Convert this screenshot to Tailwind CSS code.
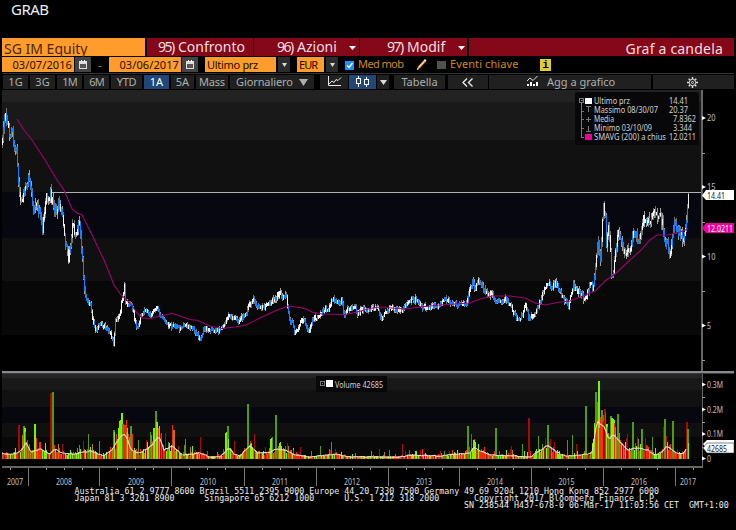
<!DOCTYPE html>
<html lang="it">
<head>
  <meta charset="UTF-8" />
  <meta name="viewport" content="width=device-width, initial-scale=1.0"/>
  <title>GRAB - SG IM Equity</title>
  <script src="https://cdn.jsdelivr.net/npm/@tailwindcss/browser@4"></script>
</head>
<body class="bg-black w-[736px] h-[530px] overflow-hidden font-['Noto_Sans',sans-serif] text-[11px] leading-none">
  <header class="h-[38px] pl-[11px] pt-px text-[15px] leading-[16px] tracking-[-0.5px] text-[#eee]">GRAB</header>

  <!-- title bar -->
  <div class="flex h-[19px] pl-[2px] pr-[2px] pb-px text-[14px] leading-[17px] text-[#f4dfe2] whitespace-nowrap">
    <div class="w-[143px] mr-[2px] pl-[2px] pt-[2px] bg-[#ff9c2b] text-[#4a2800]">SG IM Equity</div>
    <div class="w-[106px] mr-px pl-[11px] flex bg-[#840817]"><span class="w-[20px] tracking-[-1.5px]">95)</span>Confronto</div>
    <div class="w-[105px] mr-px pl-[23px] pr-[3px] flex bg-[#840817]"><span class="w-[20px] tracking-[-1.5px]">96)</span>Azioni
      <svg class="ml-auto mt-[8px]" width="7" height="4"><path d="M0 0h7L3.5 4z" fill="#fff"/></svg></div>
    <div class="w-[107px] mr-[2px] pl-[27px] pr-[2px] flex bg-[#840817]"><span class="w-[20px] tracking-[-1.5px]">97)</span>Modif
      <svg class="ml-auto mt-[8px]" width="7" height="4"><path d="M0 0h7L3.5 4z" fill="#fff"/></svg></div>
    <div class="flex-1 pr-[11px] pt-[2px] text-right bg-[#840817] tracking-[0.2px]">Graf a candela</div>
  </div>

  <!-- date range and fields -->
  <div class="flex h-[16px] pl-[2px] pb-px leading-[15px] text-[#1a0e00] whitespace-nowrap">
    <div class="w-[72px] pr-[2px] text-right bg-[#ff9c2b] tracking-[0.1px]">03/07/2016</div>
    <div class="w-[16px] ml-px bg-[#444] flex items-center justify-center">
      <svg width="8" height="9" shape-rendering="crispEdges"><path d="M0 1h8v8H0z" fill="#ddd"/><path d="M1 4h6v4H1z" fill="#555"/><path d="M2 0h1v2H2zM5 0h1v2H5z" fill="#fff"/></svg></div>
    <div class="w-[18px] text-center text-[#d98a1c]">-</div>
    <div class="w-[72px] pr-[2px] text-right bg-[#ff9c2b] tracking-[0.1px]">03/06/2017</div>
    <div class="w-[16px] ml-px bg-[#444] flex items-center justify-center">
      <svg width="8" height="9" shape-rendering="crispEdges"><path d="M0 1h8v8H0z" fill="#ddd"/><path d="M1 4h6v4H1z" fill="#555"/><path d="M2 0h1v2H2zM5 0h1v2H5z" fill="#fff"/></svg></div>
    <div class="w-[71px] ml-[7px] pl-[2px] bg-[#ff9c2b] tracking-[-0.3px]">Ultimo prz</div>
    <div class="w-[12px] ml-[2px] bg-[#2c2c2c] flex items-center justify-center"><svg width="5" height="4"><path d="M0 0h5L2.500 4z" fill="#ddd"/></svg></div>
    <div class="w-[27px] ml-[7px] pl-[2px] bg-[#ff9c2b] tracking-[-0.9px]">EUR</div>
    <div class="w-[12px] ml-[2px] bg-[#2c2c2c] flex items-center justify-center"><svg width="5" height="4"><path d="M0 0h5L2.500 4z" fill="#ddd"/></svg></div>
    <svg class="ml-[7px] mt-[4px]" width="9" height="9"><path d="M0 0h9v9H0z" fill="#1e8fff"/><path d="M2 4.500l2 2L7.500 2" fill="none" stroke="#fff" stroke-width="1.400"/></svg>
    <div class="w-[58px] ml-[4px] text-[#d08a10] leading-[14px] tracking-[-0.6px]">Med mob</div>
    <svg class="mt-[2px]" width="11" height="12"><path d="M1 11L2 7.500 7.500 1.500 9.500 3 4 9z" fill="#f2a54a"/><path d="M3 8L8 2.500" stroke="#ffe2b0"/><path d="M7.500 1.500L9 0l1.500 1.500-1 1.500z" fill="#eee"/><path d="M1 11l.5-2L3 10z" fill="#eee"/></svg>
    <div class="w-[9px] h-[8px] ml-[10px] mt-[4px] bg-[#4c544c]"></div>
    <div class="w-[90px] ml-[4px] text-[#d08a10] leading-[14px] tracking-[0.1px]">Eventi chiave</div>
    <div class="w-[11px] h-[12px] mt-[2px] bg-[#e3cc2c] text-center font-['Liberation_Mono',monospace] font-bold text-[11px] leading-[12px] text-black">i</div>
  </div>

  <!-- period buttons -->
  <nav class="flex h-[17px] ml-[2px] pl-px pt-px mr-[2px] border-t border-[#333] text-[#aab0ae] leading-[13px] text-center whitespace-nowrap">
    <div class="w-[25px] h-[14px] mr-[2px] bg-[#202020]">1G</div>
    <div class="w-[25px] h-[14px] mr-[2px] bg-[#202020]">3G</div>
    <div class="w-[25px] h-[14px] mr-[2px] bg-[#202020] tracking-[-0.8px]">1M</div>
    <div class="w-[25px] h-[14px] mr-[2px] bg-[#202020] tracking-[-0.8px]">6M</div>
    <div class="w-[31px] h-[14px] mr-[2px] bg-[#202020] tracking-[-0.3px]">YTD</div>
    <div class="w-[25px] h-[14px] mr-[2px] bg-[#1f4878] text-white">1A</div>
    <div class="w-[23px] h-[14px] mr-[2px] bg-[#202020]">5A</div>
    <div class="w-[32px] h-[14px] mr-[2px] bg-[#202020] tracking-[-0.2px]">Mass</div>
    <div class="w-[84px] h-[14px] mr-[6px] pl-[6px] bg-[#202020] flex"><span class="tracking-[-0.1px]">Giornaliero</span><svg class="ml-[6px] mt-[4px]" width="9" height="7"><path d="M0 0h9L4.500 7z" fill="#aab0ae"/></svg></div>
    <div class="w-[28px] h-[14px] mr-px pl-[7px] bg-[#202020]">
      <svg width="15" height="13" fill="none" stroke="#e8e8e8"><path d="M1.500 1v9.500H14M2 9l3-3 2 1.500 2-3 2 1 3-3"/></svg></div>
    <div class="w-[27px] h-[14px] mr-px pl-[6px] bg-[#1f4878]">
      <svg width="15" height="13" fill="none" stroke="#fff" shape-rendering="crispEdges"><path d="M1.500 3.500h4v5h-4zM3.500 1v2M3.500 9v3M9.500 4.500h4v5h-4zM11.500 2v2M11.500 10v2"/></svg></div>
    <div class="w-[12px] h-[14px] mr-[5px] bg-[#202020] flex items-center justify-center"><svg width="7" height="5"><path d="M0 0h7L3.500 5z" fill="#ddd"/></svg></div>
    <div class="w-[51px] h-[14px] mr-[3px] bg-[#202020]">Tabella</div>
    <div class="w-[40px] h-[14px] mr-px bg-[#202020] flex items-center justify-center">
      <svg width="12" height="9" fill="none" stroke="#eee" stroke-width="1.300"><path d="M5 .5l-4 4 4 4M10.500 .5l-4 4 4 4"/></svg></div>
    <div class="w-[162px] h-[14px] mr-[2px] pl-[38px] bg-[#202020] flex">
      <svg class="mt-px" width="12" height="11"><path d="M0 5l3-3 3 2.500L10.500 0" fill="none" stroke="#ddd"/><path d="M0 8h2v2H0zM3 6h2v4H3zM6 8h2v2H6zM9 6h2v4H9z" fill="#fff"/></svg>
      <span class="ml-[8px]">Agg a grafico</span></div>
    <div class="flex-1 h-[14px] pr-[3px] bg-[#202020] flex items-center justify-center">
      <svg width="11" height="11" fill="none" stroke="#ddd"><circle cx="5.500" cy="5.500" r="3.200"/><circle cx="5.500" cy="5.500" r="1"/><path stroke-width="1.500" d="M5.500 0v2M5.500 9v2M0 5.500h2M9 5.500h2M1.700 1.700l1.300 1.300M8 8l1.300 1.300M9.300 1.700L8 3M3 8L1.700 9.300"/></svg></div>
  </nav>

  <!-- price and volume; drawn in window coordinates -->
  <svg id="chart" class="block" width="736" height="396" viewBox="0 90 736 396" font-family="Noto Sans, sans-serif" font-size="8.500">
    <g shape-rendering="crispEdges">
      <path d="M2 90h700v12H2z" fill="#222"/>
      <path d="M2 102h700v38H2z" fill="#191919"/>
      <path d="M2 140h700v52H2z" fill="#111"/>
      <path d="M2 192h700v46H2z" fill="#070710"/>
      <path d="M2 238h700v43H2z" fill="#101010"/>
      <path d="M2 281h700v54H2z" fill="#080808"/>
      <path d="M2 374h700v4H2z" fill="#242424"/>
      <path d="M2 378h700v12H2z" fill="#191919"/>
      <path d="M2 390h700v17H2z" fill="#111"/>
      <path d="M2 407h700v16H2z" fill="#070710"/>
      <path d="M2 423h700v14H2z" fill="#101010"/>
      <path d="M2 437h700v21H2z" fill="#080808"/>
      <path d="M50 192h652" transform="translate(0 .5)" stroke="#b0b0b0"/>
      <path d="M2 371h732v2H2z" fill="#8b878e"/>
      <path d="M2 373h732v1H2z" fill="#3c3a3e"/>
      <path d="M2 466h701v2H2z" fill="#66665f"/>
      <path d="M701 90h2v281h-2zM702 374h1v94h-1z" fill="#66665f"/>
    </g>
    <g id="volume" shape-rendering="crispEdges"></g>
    <polyline id="volumeAvg" fill="none" stroke="#e4dccc" stroke-width="1.100"/>
    <g id="price" shape-rendering="crispEdges"></g>
    <polyline id="sma" fill="none" stroke="#a00070" stroke-width="1.100"/>
    <g id="axes"></g>

    <g fill="#d0d0d0">
      <rect x="575" y="92" width="124" height="53" rx="2" fill="#08080a"/>
      <path d="M579.500 98.500h4v4h-4zM580.500 100.500h2M581.500 103v34.500M582 111.500h2M582 119.500h2M582 128.500h2M582 137.500h2M586 106.500h5M588.500 107v5M586 119.500h5M588.500 117v5M586 131.500h5M588.500 126v5" fill="none" stroke="#777" shape-rendering="crispEdges"/>
      <path d="M585 98h7v6h-7z" fill="#fff"/>
      <path d="M585 134h7v6h-7z" fill="#f0009a"/>
      <text x="594" y="104" textLength="36" lengthAdjust="spacingAndGlyphs">Ultimo prz</text>
      <text x="594" y="113" textLength="64" lengthAdjust="spacingAndGlyphs">Massimo 08/30/07</text>
      <text x="594" y="122" textLength="20" lengthAdjust="spacingAndGlyphs">Media</text>
      <text x="594" y="131" textLength="58" lengthAdjust="spacingAndGlyphs">Minimo 03/10/09</text>
      <text x="594" y="140" textLength="72" lengthAdjust="spacingAndGlyphs">SMAVG (200) a chius</text>
      <text x="669" y="104" textLength="19" lengthAdjust="spacingAndGlyphs">14.41</text>
      <text x="669" y="113" textLength="19" lengthAdjust="spacingAndGlyphs">20.37</text>
      <text x="673" y="122" textLength="23" lengthAdjust="spacingAndGlyphs">7.8362</text>
      <text x="673" y="131" textLength="19" lengthAdjust="spacingAndGlyphs">3.344</text>
      <text x="669" y="140" textLength="27" lengthAdjust="spacingAndGlyphs">12.0211</text>
      <rect x="316" y="376" width="71" height="16" fill="#08080a"/>
      <path d="M320.500 381.500h4v4h-4zM322 383.500h1" fill="none" stroke="#777" shape-rendering="crispEdges"/>
      <path d="M326 380h7v7h-7z" fill="#fff"/>
      <text x="335" y="387.500" textLength="48" lengthAdjust="spacingAndGlyphs">Volume 42685</text>
    </g>

    <path d="M702 195.500l4-5.500h28v10h-28z" fill="#fff"/>
    <text x="707" y="198.500" textLength="18" lengthAdjust="spacingAndGlyphs" fill="#222">14.41</text>
    <path d="M702 228l4-5h28v10h-28z" fill="#f0009a"/>
    <text x="707" y="231.500" textLength="26" lengthAdjust="spacingAndGlyphs" fill="#fff">12.0211</text>
    <path d="M703 444l4-4h27v9h-27z" fill="#fff"/>
    <path d="M703 448l4-5h27v10h-27z" fill="#fff" stroke="#333" stroke-width=".6"/>
    <text x="707" y="451.500" textLength="20" lengthAdjust="spacingAndGlyphs" fill="#222">42685</text>
  </svg>

  <pre class="w-[660px] mt-[2px] ml-[74.500px] font-['DejaVu_Sans_Mono',monospace] text-[8.300px] leading-[7px] text-[#eee]">Australia 61 2 9777 8600 Brazil 5511 2395 9000 Europe 44 20 7330 7500 Germany 49 69 9204 1210 Hong Kong 852 2977 6000
Japan 81 3 3201 8900      Singapore 65 6212 1000      U.S. 1 212 318 2000       Copyright 2017 Bloomberg Finance L.P.
                                                                              SN 238544 H437-678-0 06-Mar-17 11:03:56 CET  GMT+1:00</pre>

  <script>
    const NS = 'http://www.w3.org/2000/svg';
    let seed = 42;
    const rnd = () => (seed = (seed * 16807) % 2147483647) / 2147483647;
    const parse = (s) => s.trim().split(/\s+/).map(p => p.split(',').map(Number));
    const at = (pts, x) => {
      let i = 1;
      while (i < pts.length - 1 && pts[i][0] < x) i++;
      const [x0, y0] = pts[i - 1], [x1, y1] = pts[i];
      return y0 + (y1 - y0) * Math.min(1, Math.max(0, (x - x0) / (x1 - x0)));
    };
    const rect = (g, x, y, w, h, fill) => {
      const r = document.createElementNS(NS, 'rect');
      r.setAttribute('x', x); r.setAttribute('y', y);
      r.setAttribute('width', w); r.setAttribute('height', h);
      r.setAttribute('fill', fill);
      g.appendChild(r);
    };
    const label = (g, x, y, str, anchor, width) => {
      const t = document.createElementNS(NS, 'text');
      t.setAttribute('x', x); t.setAttribute('y', y);
      t.setAttribute('fill', '#c0c0c0');
      t.setAttribute('text-anchor', anchor);
      t.setAttribute('textLength', width);
      t.setAttribute('lengthAdjust', 'spacingAndGlyphs');
      t.textContent = str;
      g.appendChild(t);
    };

    const close = parse(`2,143 3,130 5,116 7,125 10,137 12,131 14,142 16,152 17,165 18,180 19,193 21,200 23,198 25,188 28,178 30,184
      32,203 33,212 35,200 37,207 40,215 42,227 44,215 46,196 48,200 50,194 53,205 55,210 58,204 60,206 62,218 64,238 66,248 68,257
      70,248 72,222 74,230 76,236 78,220 80,232 82,260 84,290 86,300 88,303 90,305 92,318 94,327 97,329 100,322 103,325 107,329
      110,332 113,345 115,322 118,318 120,310 122,296 124,285 125,300 127,305 130,302 133,312 135,323 137,328 140,316 143,312
      145,309 148,314 152,313 155,309 157,306 160,314 164,319 168,324 175,327 180,328 187,325 193,329 197,334 200,339 204,328
      212,329 219,330 224,326 227,316 233,316 238,321 242,317 246,314 248,305 253,299 256,304 260,308 266,305 272,300 276,296
      280,293 283,298 286,296 287,305 289,320 292,322 294,331 297,329 300,320 303,319 306,325 309,331 312,318 317,316 320,313
      323,309 328,308 332,297 335,299 338,303 341,300 344,315 347,306 350,309 354,305 357,314 361,309 370,309 377,306 380,318
      384,314 390,307 395,308 402,309 406,302 411,299 416,300 422,307 430,306 440,304 445,297 450,302 457,304 466,302 468,294
      472,281 474,289 477,281 481,285 486,293 490,294 494,300 500,301 506,299 510,304 513,311 517,318 521,316 525,305 529,319
      535,312 540,300 544,287 548,284 552,286 556,283 560,293 565,299 568,305 573,284 577,290 580,293 584,300 588,290 590,283
      593,287 595,265 598,240 600,258 602,220 603,208 605,220 606,245 608,224 610,250 611,275 613,270 616,245 618,232 620,240
      623,250 626,252 629,253 631,248 633,230 636,235 638,245 640,237 643,217 646,223 650,220 653,210 656,214 660,217 662,221
      664,239 667,246 669,252 672,238 674,226 677,228 680,235 683,237 685,228 687,210 688,194`);
    const sma = `17,119 24,130 32,140 45,160 57,180 64,190 72,209 77,213 82,215 92,235 104,260 114,285 121,295 130,303 137,313 142,318
      150,318.5 160,316 172,313.5 180,316 190,319.5 198,320.5 210,326 222,328.5 235,327 246,325 260,318 275,311 288,306 300,307.5
      306,309 312,312 322,314 345,314.5 357,312 370,308.5 380,307 392,308 405,309 420,307 440,305 470,303 480,299 492,296 510,296
      525,298 535,303 545,305 560,302 570,301 583,296 595,291 605,281 616,273 628,262 640,251 650,240 657,235 668,235 680,232 688,229`;
    const avg = parse(`2,454 15,454 22,450 26,443 31,452 40,449 50,454 55,449 62,453 75,454 90,451 103,456 112,450 118,440 123,434
      127,437 131,450 139,453 147,449 152,445 159,436 164,450 172,446 176,449 182,455 200,453 210,457 220,457 229,448 234,454
      240,456 244,451 250,446 258,453 268,453 276,449 285,450 295,455 310,457 335,454 350,457 400,457 410,455 440,456 470,453
      474,447 480,451 490,455 515,456 530,457 540,451 547,445 555,451 565,456 580,455 592,453 597,421 600,424 604,426 609,440
      613,434 620,442 628,450 636,448 648,450 655,455 662,452 667,446 673,451 680,454 685,452 687,447`);

    // candles
    const price = document.getElementById('price');
    let prev = at(close, 2);
    for (let x = 2; x <= 688; x++) {
      const base = at(close, x);
      const wild = base < 262 ? 9 : base < 300 ? 5.5 : 4;
      const y = base + (rnd() - .5) * wild;
      const top = Math.min(prev, y), h = Math.abs(prev - y);
      const up = rnd() * wild * .7, dn = rnd() * wild * .7;
      rect(price, x, Math.round(top - up), 1, Math.round(h + up + dn + 1), rnd() < .5 ? '#707070' : '#a0a0a0');
      const down = y > prev ? rnd() < .8 : rnd() < .35;
      rect(price, x, Math.round(top - .5), 1, Math.round(h + 2.5), down ? '#1080ff' : '#f2f2f2');
      prev = y;
    }
    document.getElementById('sma').setAttribute('points', sma);

    // volume bars
    const vol = document.getElementById('volume');
    const G = '#80f000', g = '#4f9c08', R = '#ff2408', r = '#a80808', O = '#b87a00';
    for (let x = 2; x < 688; x++) {
      const base = 458 - at(avg, x);
      const h = Math.max(2, base * (.6 + rnd() * .9) + (rnd() < .2 ? rnd() * 6 : 0));
      const c = rnd();
      rect(vol, x, Math.round(458 - h), 1, Math.round(h) + 1, c < .4 ? R : c < .7 ? G : c < .92 ? O : r);
    }
    const spikes = [[18,425,r],[22,435,O],[23,426,g],[24,428,G],[25,432,g],[34,424,G],[36,438,R],[40,442,R],[45,443,G],[50,393,r],[52,392,g],
      [62,444,r],[79,445,g],[83,441,r],[88,434,g],[99,441,g],[113,430,g],[114,432,G],[116,434,R],[118,428,G],[119,421,G],[120,420,G],
      [121,413,G],[122,424,g],[123,432,R],[124,425,R],[125,425,R],[126,432,O],[130,426,g],[132,434,R],[138,440,g],[146,440,r],[150,432,g],[151,435,O],
      [153,428,G],[155,411,g],[156,422,G],[158,428,R],[160,434,r],[165,433,r],[168,442,g],[172,425,R],[173,430,O],[178,446,r],[184,445,g],
      [185,439,g],[200,437,r],[225,433,G],[226,432,G],[227,426,g],[228,439,G],[234,441,r],[247,404,g],[250,444,G],[251,443,G],[254,434,r],
      [258,451,R],[270,439,G],[271,438,G],[272,437,g],[275,415,g],[279,443,G],[280,442,G],[287,443,r],[293,450,R],[300,447,r],[311,451,g],
      [320,446,g],[329,449,g],[331,442,g],[335,449,r],[379,449,r],[389,450,g],[402,444,r],[444,451,g],[449,451,r],[467,426,g],[469,447,R],
      [471,434,R],[473,440,G],[474,440,G],[475,442,G],[478,444,G],[495,428,g],[496,444,g],[510,449,r],[511,446,r],[522,444,g],[528,418,r],
      [538,436,g],[542,444,g],[545,438,r],[547,425,g],[550,439,r],[554,442,r],[567,440,g],[572,435,g],[576,444,r],[585,406,g],[592,443,G],
      [593,439,G],[594,423,G],[595,392,g],[596,423,R],[597,402,g],[598,381,G],[599,428,R],[600,420,R],[601,410,g],[602,421,R],[603,422,r],[604,409,r],
      [605,413,R],[606,424,G],[607,427,R],[609,436,R],[610,416,g],[611,418,G],[612,419,G],[613,420,G],[614,423,R],[615,434,G],[617,414,g],[618,433,g],
      [620,440,R],[626,438,r],[627,434,r],[632,422,g],[637,437,r],[641,429,g],[645,438,r],[652,437,g],[663,427,r],[664,419,g],[666,436,r],
      [672,421,g],[677,449,r],[686,422,r],[687,429,g],[688,443,G]];
    spikes.forEach(([x, y, c]) => rect(vol, x, y, y < 432 && c !== R ? 1.5 : 1, 459 - y, c));
    const line = [];
    for (let x = 2; x <= 687; x += 2) line.push(x + ',' + (at(avg, x) + (rnd() - .5)).toFixed(1));
    document.getElementById('volumeAvg').setAttribute('points', line.join(' '));

    // axes
    const axes = document.getElementById('axes');
    const tri = (y) => {
      const p = document.createElementNS(NS, 'path');
      p.setAttribute('d', `M702 ${y - 2}l4 2l-4 2z`);
      p.setAttribute('fill', '#fff');
      axes.appendChild(p);
    };
    [[118, '20', 8.5], [187, '15', 8.5], [256.500, '10', 8.5], [325.500, '5', 4], [384.500, '0.3M', 16], [409.500, '0.2M', 16], [434, '0.1M', 16], [458.500, '0', 4]].forEach(([y, s, w]) => {
      tri(y);
      label(axes, 707, y + 3, s, 'start', w);
    });
    [153, 222, 291, 360, 397, 422, 447].forEach(y => rect(axes, 702, y, 3, 1, '#999'));
    const years = [28, 99, 171, 244, 316, 388, 459, 531, 603, 675];
    years.forEach(x => {
      rect(axes, x, 468, 1, 18, '#777');
      for (let q = 1; q < 4; q++) if (x + q * 18 < 696) rect(axes, x + q * 18, 468, 1, 2, '#999');
    });
    rect(axes, 10, 468, 1, 2, '#999');
    // 2007 and 2017 are partial years
    [15, 64, 136, 208, 280, 352, 424, 495, 566.500, 639, 688].forEach((x, i) => label(axes, x, 484.500, 2007 + i, 'middle', 16));
  </script>
</body>
</html>
